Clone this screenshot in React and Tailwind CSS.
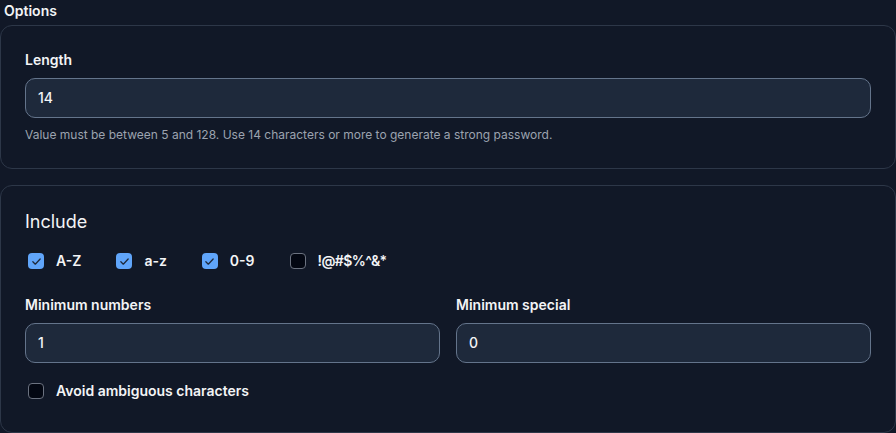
import React from "react";

function Check({ checked, label, labelClass = "" }) {
  return (
    <label className="flex items-center">
      <span
        className={
          "ml-[3px] mr-3 flex h-4 w-4 items-center justify-center rounded-[4px] " +
          (checked ? "bg-[#60a5fa]" : "border border-[#6b7280] bg-[#030712]")
        }
      >
        {checked && (
          <svg viewBox="0 0 16 16" className="h-[13px] w-[13px]" fill="none" stroke="#1e293b" strokeWidth="1.6" strokeLinecap="round" strokeLinejoin="round">
            <path d="M3.5 8.3l3 3 6-6.3" />
          </svg>
        )}
      </span>
      <span className={"text-sm font-semibold leading-5 text-[#f3f4f6] " + labelClass}>{label}</span>
    </label>
  );
}

function Input({ value }) {
  return (
    <div className="flex h-10 items-center rounded-[10px] border border-[#64748b] bg-[#1e293b] px-3 text-sm font-medium text-[#f3f4f6]">
      {value}
    </div>
  );
}

export default function App() {
  return (
    <div className="h-[433px] w-[896px] overflow-hidden bg-[#111827] font-['Inter',sans-serif] text-[#f3f4f6]">
      <div className="px-1 pt-[1px] text-sm font-semibold leading-5">Options</div>
      <div className="mt-1 rounded-xl border border-[#2d3748] bg-[#111827] p-6">
        <div className="mb-2 text-sm font-semibold leading-5">Length</div>
        <Input value="14" />
        <p className="mt-2 text-xs leading-[18px] text-[#9ca3af]">
          Value must be between 5 and 128. Use 14 characters or more to generate a strong password.
        </p>
      </div>
      <div className="mt-4 rounded-xl border border-[#2d3748] bg-[#111827] px-6 pt-6 pb-[31px]">
        <div className="text-lg leading-6">Include</div>
        <div className="mt-[17px] flex items-center gap-x-8">
          <Check checked label="A-Z" />
          <Check checked label="a-z" />
          <Check checked label="0-9" />
          <Check label="!@#$%^&*" labelClass="tracking-[-0.6px]" />
        </div>
        <div className="mt-6 grid grid-cols-2 gap-x-4">
          <div>
            <div className="mb-2 text-sm font-semibold leading-5">Minimum numbers</div>
            <Input value="1" />
          </div>
          <div>
            <div className="mb-2 text-sm font-semibold leading-5">Minimum special</div>
            <Input value="0" />
          </div>
        </div>
        <div className="mt-[18px]">
          <Check label="Avoid ambiguous characters" />
        </div>
      </div>
    </div>
  );
}
